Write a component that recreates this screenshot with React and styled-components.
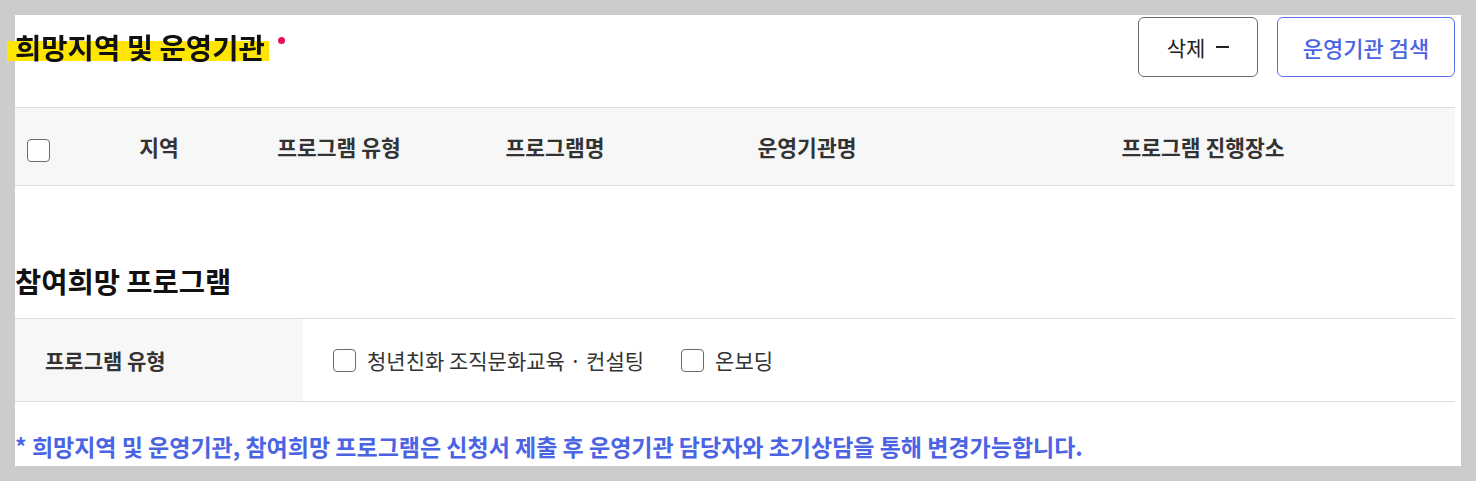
import React from 'react';
import styled, { createGlobalStyle } from 'styled-components';

const GlobalStyle = createGlobalStyle`
  html, body {
    margin: 0;
    padding: 0;
    background: #cccccc;
  }
  body {
    font-family: "Noto Sans CJK KR", "Noto Sans", sans-serif;
    color: #222222;
  }
`;

const Page = styled.div`
  padding: 15px 15px 15px 15px;
`;

const Panel = styled.section`
  background: #ffffff;
  width: 1446px;
  padding: 2px 6px 5px 0;
  box-sizing: border-box;
`;

const TopRow = styled.div`
  display: flex;
  align-items: center;
  justify-content: space-between;
  height: 60px;
`;

const TitleWrap = styled.div`
  display: flex;
  align-items: flex-start;
  gap: 13px;
`;

const MainTitle = styled.h2`
  position: relative;
  margin: 0;
  font-size: 28.6px;
  font-weight: 700;
  line-height: 36px;
  color: #111111;
  z-index: 0;
  &::before {
    content: '';
    position: absolute;
    left: -8px;
    right: -4px;
    top: 12px;
    height: 20px;
    background: #ffe600;
    mix-blend-mode: multiply;
    z-index: -1;
  }
`;

const RequiredDot = styled.span`
  width: 7px;
  height: 7px;
  border-radius: 50%;
  background: #e6124f;
  margin-top: 8px;
`;

const Actions = styled.div`
  display: flex;
  gap: 19px;
`;

const ActionButton = styled.button`
  height: 60px;
  padding: 0;
  width: ${p => (p.$primary ? '178px' : '120px')};
  border: 1px solid ${p => (p.$primary ? '#5a72ea' : '#6b6b6b')};
  border-radius: 6px;
  background: #ffffff;
  color: ${p => (p.$primary ? '#4a64e4' : '#222222')};
  font-family: inherit;
  font-size: ${p => (p.$primary ? '22px' : '21px')};
  font-weight: ${p => (p.$primary ? 500 : 400)};
  display: flex;
  align-items: center;
  justify-content: center;
  gap: 11px;
`;

const Minus = styled.span`
  display: inline-block;
  width: 13px;
  height: 2px;
  background: #222222;
`;

const Table = styled.table`
  width: 1440px;
  border-collapse: collapse;
  table-layout: fixed;
  margin-top: 30px;
  border-top: 1px solid #dddddd;
  border-bottom: 1px solid #dddddd;
`;

const Th = styled.th`
  height: 77px;
  padding: 0;
  background: #f7f7f7;
  font-size: 21.5px;
  font-weight: 700;
  color: #333333;
  text-align: ${p => (p.$left ? 'left' : 'center')};
  padding-left: ${p => (p.$left ? '12px' : '0')};
`;

const Box = styled.span`
  display: inline-block;
  width: 21px;
  height: 21px;
  border: 1.5px solid #6b6b6b;
  border-radius: 4px;
  background: #ffffff;
  vertical-align: middle;
  flex: none;
`;

const SectionTitle = styled.h3`
  margin: 75px 0 17px;
  font-size: 28.5px;
  font-weight: 700;
  line-height: 40px;
  color: #111111;
`;

const InfoTable = styled.div`
  display: grid;
  grid-template-columns: 288px 1fr;
  width: 1440px;
  height: 82px;
  border-top: 1px solid #dddddd;
  border-bottom: 1px solid #dddddd;
`;

const Label = styled.div`
  background: #f7f7f7;
  display: flex;
  align-items: center;
  padding-left: 30px;
  font-size: 21px;
  font-weight: 700;
  color: #333333;
`;

const Options = styled.div`
  display: flex;
  align-items: center;
  gap: 37px;
  padding-left: 30px;
`;

const Option = styled.label`
  display: flex;
  align-items: center;
  gap: 11px;
  font-size: 21px;
  color: #333333;
`;

const Note = styled.p`
  margin: 29px 0 0;
  line-height: 30px;
  font-size: 23px;
  font-weight: 700;
  color: #4a64e4;
`;

const columns = [
  { key: 'check', width: '5%' },
  { key: '지역', width: '10%' },
  { key: '프로그램 유형', width: '15%' },
  { key: '프로그램명', width: '15%' },
  { key: '운영기관명', width: '20%' },
  { key: '프로그램 진행장소', width: '35%' },
];

export default function App() {
  return (
    <>
      <GlobalStyle />
      <Page>
        <Panel>
          <TopRow>
            <TitleWrap>
              <MainTitle>희망지역 및 운영기관</MainTitle>
              <RequiredDot />
            </TitleWrap>
            <Actions>
              <ActionButton>
                삭제 <Minus />
              </ActionButton>
              <ActionButton $primary>운영기관 검색</ActionButton>
            </Actions>
          </TopRow>

          <Table>
            <colgroup>
              {columns.map(c => (
                <col key={c.key} style={{ width: c.width }} />
              ))}
            </colgroup>
            <thead>
              <tr>
                {columns.map(c =>
                  c.key === 'check' ? (
                    <Th key={c.key} $left>
                      <Box />
                    </Th>
                  ) : (
                    <Th key={c.key}>{c.key}</Th>
                  )
                )}
              </tr>
            </thead>
          </Table>

          <SectionTitle>참여희망 프로그램</SectionTitle>
          <InfoTable>
            <Label>프로그램 유형</Label>
            <Options>
              <Option>
                <Box />
                청년친화 조직문화교육 · 컨설팅
              </Option>
              <Option>
                <Box />
                온보딩
              </Option>
            </Options>
          </InfoTable>

          <Note>
            * 희망지역 및 운영기관, 참여희망 프로그램은 신청서 제출 후 운영기관 담당자와 초기상담을 통해 변경가능합니다.
          </Note>
        </Panel>
      </Page>
    </>
  );
}
